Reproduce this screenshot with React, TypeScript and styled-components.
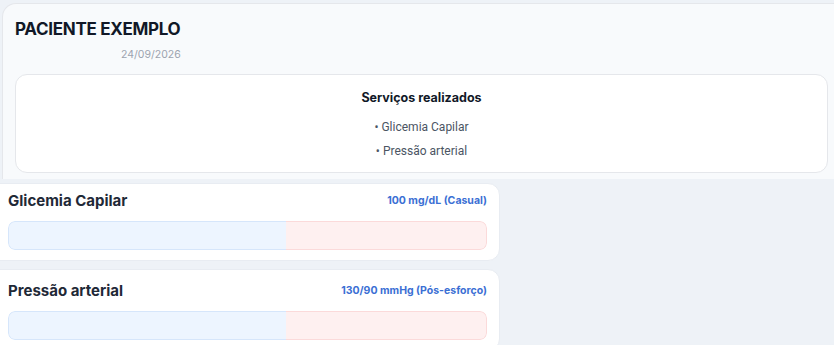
import styled, { createGlobalStyle } from "styled-components";

const GlobalStyle = createGlobalStyle`
  html, body {
    margin: 0;
    padding: 0;
    background: #eef2f7;
    font-family: Inter, "Noto Sans", sans-serif;
    overflow: hidden;
  }
`;

const Page = styled.div`
  width: 834px;
  height: 345px;
  overflow: hidden;
  padding-top: 3px;
  box-sizing: border-box;
`;

const Header = styled.section`
  margin-left: 2px;
  margin-right: -20px;
  background: #f8fafc;
  border: 1px solid #e5e7eb;
  border-right: none;
  border-bottom: none;
  border-radius: 14px 0 0 0;
  padding: 15px 12px 6px 12px;
`;

const PatientName = styled.h1`
  margin: 0;
  font-size: 17px;
  font-weight: 700;
  color: #111827;
  letter-spacing: -0.3px;
  line-height: 20px;
`;

const DateText = styled.div`
  margin: 10px 0 0 106px;
  font-size: 10.5px;
  color: #9ca3af;
  line-height: 12px;
`;

const ServicesCard = styled.div`
  margin: 13px 14px 0 0;
  background: #ffffff;
  border: 1px solid #e5e7eb;
  border-radius: 12px;
  padding: 15px 0 13px;
  display: flex;
  flex-direction: column;
  align-items: center;
  gap: 9px;
`;

const ServicesTitle = styled.div`
  font-size: 12.5px;
  font-weight: 700;
  color: #111827;
  margin-bottom: 6px;
`;

const ServiceItem = styled.div`
  font-family: Roboto, "Noto Sans", sans-serif;
  font-size: 12px;
  color: #4b5563;
  line-height: 15px;
`;

const Metrics = styled.div`
  margin-top: 4px;
  display: flex;
  flex-direction: column;
  gap: 8px;
`;

const MetricCard = styled.div<{ $top: number }>`
  margin-left: -12px;
  width: 512px;
  box-sizing: border-box;
  background: #ffffff;
  border: 1px solid #e8ecf2;
  border-radius: 12px;
  padding: ${(p) => p.$top}px 12px 10px 19px;
`;

const MetricHead = styled.div`
  display: flex;
  justify-content: space-between;
  align-items: center;
  height: 18px;
`;

const MetricName = styled.div`
  font-size: 15px;
  font-weight: 700;
  color: #1f2937;
`;

const MetricValue = styled.div`
  font-size: 10.5px;
  font-weight: 700;
  color: #3b6fd4;
`;

const Bar = styled.div`
  margin-top: 12px;
  height: 29px;
  display: flex;
  border-radius: 7px;
  overflow: hidden;
`;

const Segment = styled.div<{ $tone: "blue" | "red"; $grow: number }>`
  flex: ${(p) => p.$grow};
  background: ${(p) => (p.$tone === "blue" ? "#edf5ff" : "#fef0f0")};
  border: 1px solid ${(p) => (p.$tone === "blue" ? "#d6e6fb" : "#fbdada")};
  border-left-width: ${(p) => (p.$tone === "red" ? 0 : 1)}px;
  border-right-width: ${(p) => (p.$tone === "blue" ? 0 : 1)}px;
  border-radius: ${(p) => (p.$tone === "blue" ? "7px 0 0 7px" : "0 7px 7px 0")};
`;

const metrics = [
  { name: "Glicemia Capilar", value: "100 mg/dL (Casual)", top: 7 },
  { name: "Pressão arterial", value: "130/90 mmHg (Pós-esforço)", top: 11 },
];

export default function App() {
  return (
    <Page>
      <GlobalStyle />
      <Header>
        <PatientName>PACIENTE EXEMPLO</PatientName>
        <DateText>24/09/2026</DateText>
        <ServicesCard>
          <ServicesTitle>Serviços realizados</ServicesTitle>
          <ServiceItem>• Glicemia Capilar</ServiceItem>
          <ServiceItem>• Pressão arterial</ServiceItem>
        </ServicesCard>
      </Header>
      <Metrics>
        {metrics.map((m) => (
          <MetricCard key={m.name} $top={m.top}>
            <MetricHead>
              <MetricName>{m.name}</MetricName>
              <MetricValue>{m.value}</MetricValue>
            </MetricHead>
            <Bar>
              <Segment $tone="blue" $grow={58} />
              <Segment $tone="red" $grow={42} />
            </Bar>
          </MetricCard>
        ))}
      </Metrics>
    </Page>
  );
}
